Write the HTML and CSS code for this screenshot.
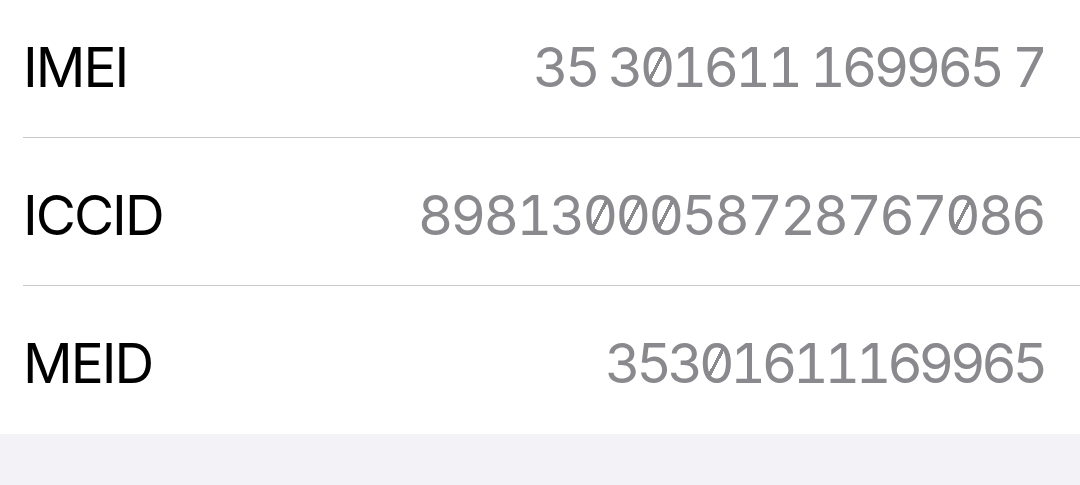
FILE: index.html
```html
<!DOCTYPE html>
<html lang="en">
<head>
  <meta charset="UTF-8">
  <meta name="viewport" content="width=device-width, initial-scale=1.0">
  <title>About</title>
  <link rel="stylesheet" href="styles.css">
</head>
<body>

  <main>
    <ul class="info-list">
      <li class="info-row">
        <div class="row-inner">
          <span class="label">IMEI</span>
          <span class="value imei">35 3<span class="z">0</span>1611 169965 7</span>
        </div>
      </li>
      <li class="info-row">
        <div class="row-inner">
          <span class="label">ICCID</span>
          <span class="value">89813<span class="z">0</span><span class="z">0</span><span class="z">0</span>58728767<span class="z">0</span>86</span>
        </div>
      </li>
      <li class="info-row">
        <div class="row-inner">
          <span class="label">MEID</span>
          <span class="value meid">353<span class="z">0</span>1611169965</span>
        </div>
      </li>
    </ul>
  </main>

</body>
</html>
```

FILE: styles.css
```css
html, body {
  height: 100%;
  margin: 0;
}

body {
  font-family: Inter, "Noto Sans", sans-serif;
  background-color: #f2f2f7;
  color: #000;
  overflow: hidden;
}

.info-list {
  list-style: none;
  margin: -10px 0 0 0;
  padding: 0;
  background-color: #fff;
}

.info-row {
  padding-left: 23px;
}

.row-inner {
  height: 147px;
  display: flex;
  justify-content: space-between;
  align-items: center;
  padding-right: 36px;
  border-bottom: 1px solid #c8c7cc;
}

.info-row:last-child .row-inner {
  height: 148px;
  border-bottom: none;
}

.label {
  font-size: 55px;
  letter-spacing: -2px;
  padding-top: 6px;
}

.value {
  font-size: 55px;
  color: #8a8a8e;
  font-feature-settings: "tnum";
  letter-spacing: -2.7px;
  padding-top: 6px;
}

.value.imei {
  letter-spacing: -3.8px;
}

.value.meid {
  letter-spacing: -4.3px;
}

.z {
  display: inline-block;
  background-image: linear-gradient(to bottom right,
    transparent calc(50% - 1.7px),
    #8a8a8e calc(50% - 1.7px),
    #8a8a8e calc(50% + 1.7px),
    transparent calc(50% + 1.7px));
  background-size: 15px 29px;
  background-position: calc(50% + 1px) 50%;
  background-repeat: no-repeat;
}
```
